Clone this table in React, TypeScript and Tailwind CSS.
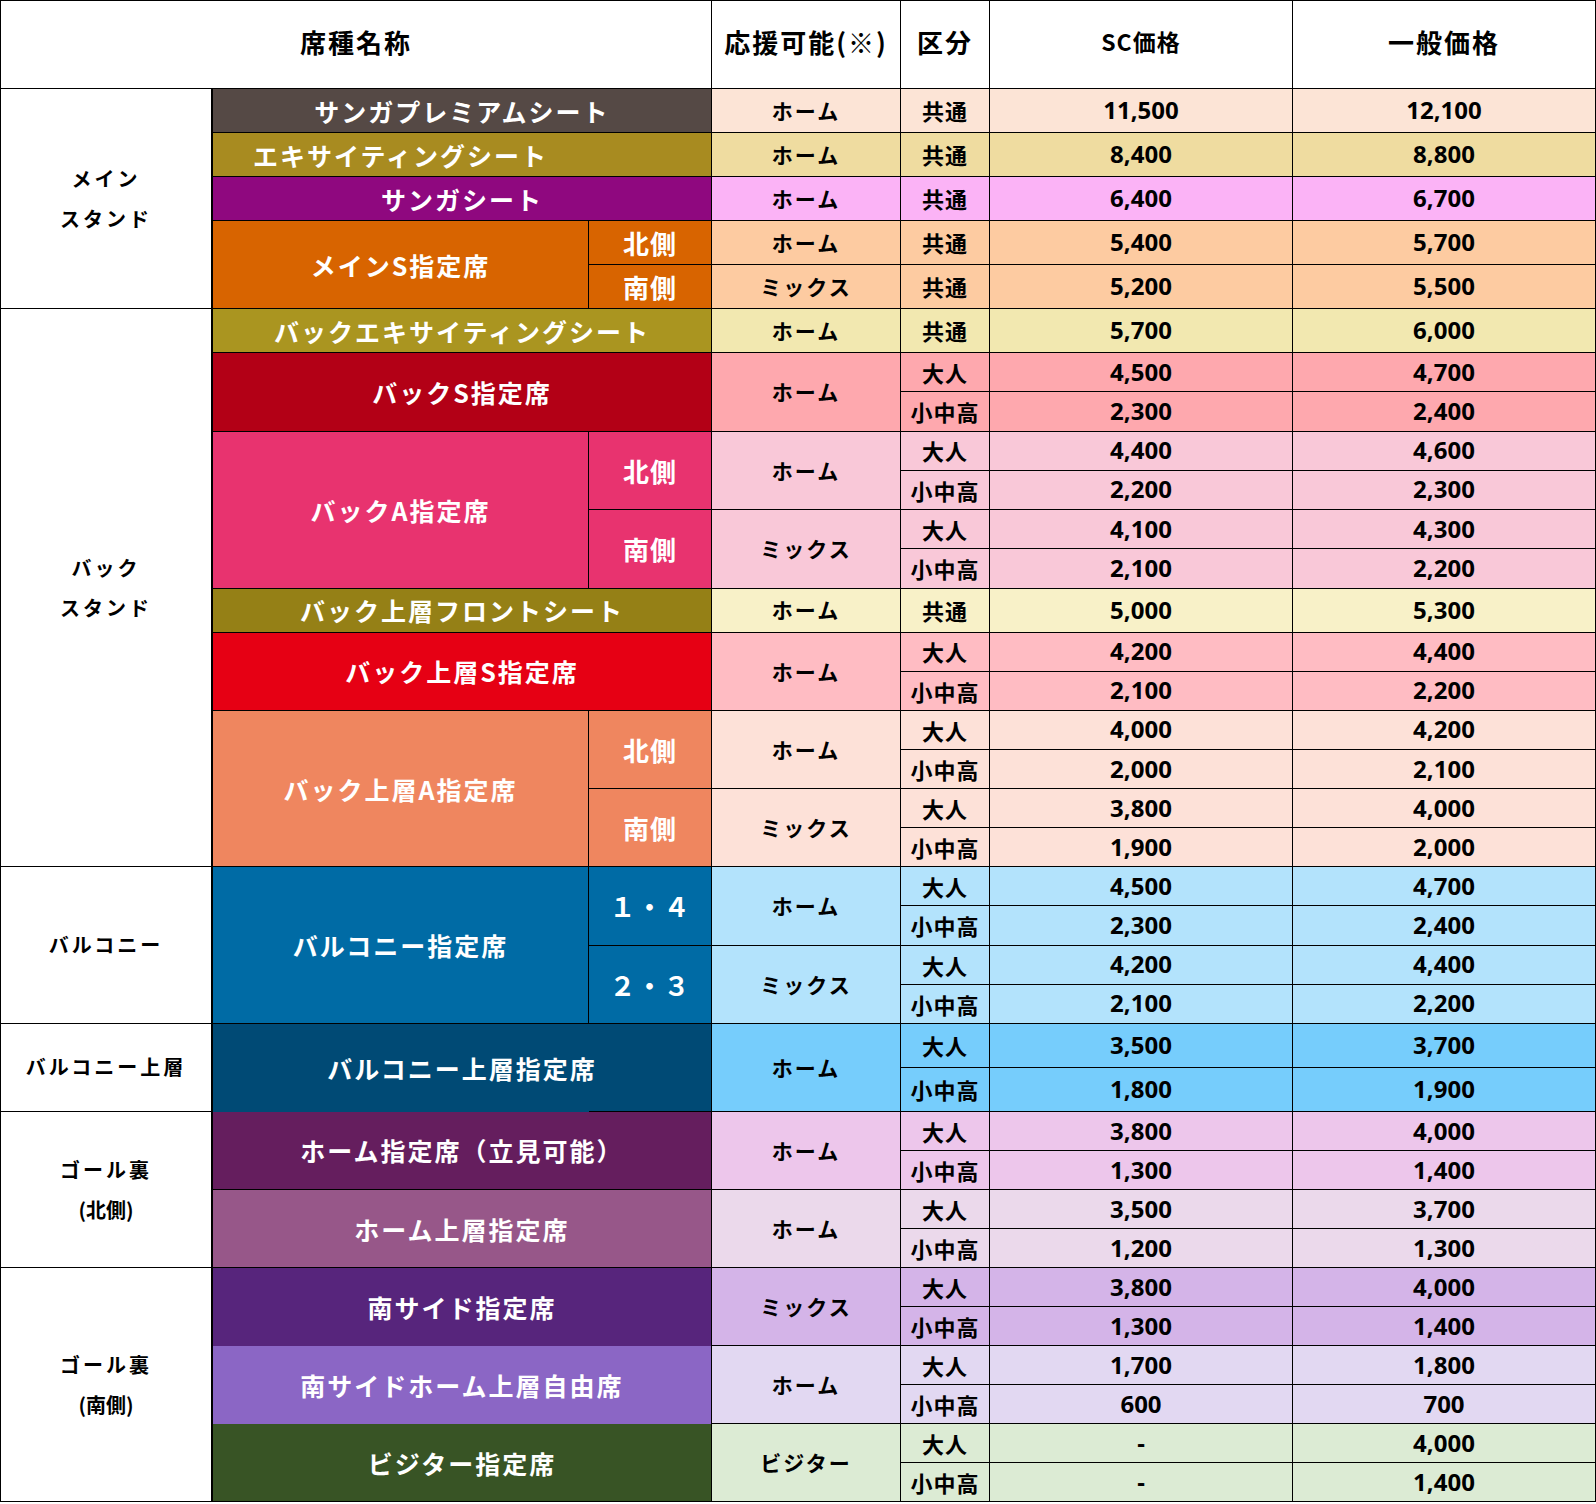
import React from "react";

const BASE =
  "flex items-center justify-center text-center border-r border-b border-black leading-[1.2] whitespace-nowrap";
const NUM = "font-['Noto_Sans','Noto_Sans_CJK_JP',sans-serif] text-[24px] text-black";
const KUBUN = "text-[22px] tracking-[1px] text-black";
const SUPPORT = "text-[21px] tracking-[2px] text-black";
const NAME = "text-white text-[25px] tracking-[2px]";
const SIDE = "text-white text-[26px] tracking-[1px]";
const AREA = "bg-white text-black text-[20px] tracking-[3px] leading-[40px] flex-col border-r-2";
const HEAD = "bg-white pb-[6px]";

function Cell({ className = "", children }: { className?: string; children?: React.ReactNode }) {
  return <div className={`${BASE} ${className}`}>{children}</div>;
}

// one row with 共通
function Single({ bg, support, sc, gen }: { bg: string; support: string; sc: string; gen: string }) {
  return (
    <>
      <Cell className={`${bg} ${SUPPORT}`}>{support}</Cell>
      <Cell className={`${bg} ${KUBUN}`}>共通</Cell>
      <Cell className={`${bg} ${NUM}`}>{sc}</Cell>
      <Cell className={`${bg} ${NUM}`}>{gen}</Cell>
    </>
  );
}

// 大人 / 小中高 pair (support cell spans two rows)
function Pair({ bg, support, a, b }: { bg: string; support: string; a: [string, string]; b: [string, string] }) {
  return (
    <>
      <Cell className={`${bg} ${SUPPORT} row-span-2`}>{support}</Cell>
      <Cell className={`${bg} ${KUBUN}`}>大人</Cell>
      <Cell className={`${bg} ${NUM}`}>{a[0]}</Cell>
      <Cell className={`${bg} ${NUM}`}>{a[1]}</Cell>
      <Cell className={`${bg} ${KUBUN}`}>小中高</Cell>
      <Cell className={`${bg} ${NUM}`}>{b[0]}</Cell>
      <Cell className={`${bg} ${NUM}`}>{b[1]}</Cell>
    </>
  );
}

export default function App() {
  return (
    <div className="w-[1596px] bg-white font-['Noto_Sans_CJK_JP','Noto_Sans_CJK_SC',sans-serif] font-bold text-black">
      <div className="grid grid-cols-[212px_376px_123px_189px_89px_303px_303px] grid-rows-[88px_repeat(6,44px)_repeat(6,39.25px)_44px_repeat(10,39.15px)_repeat(2,44px)_repeat(10,39.05px)] border-l border-t border-black">
        {/* header */}
        <Cell className={`${HEAD} col-span-3 text-[26px] tracking-[2px]`}>席種名称</Cell>
        <Cell className={`${HEAD} text-[26px] tracking-[2px]`}>応援可能(※)</Cell>
        <Cell className={`${HEAD} text-[26px] tracking-[2px]`}>区分</Cell>
        <Cell className={`${HEAD} text-[23px] tracking-[1px]`}>SC価格</Cell>
        <Cell className={`${HEAD} text-[26px] tracking-[2px]`}>一般価格</Cell>

        {/* メインスタンド */}
        <Cell className={`${AREA} row-span-5`}>
          <span>メイン</span>
          <span>スタンド</span>
        </Cell>
        <Cell className={`${NAME} col-span-2 bg-[#554945]`}>サンガプレミアムシート</Cell>
        <Single bg="bg-[#fce4d6]" support="ホーム" sc="11,500" gen="12,100" />
        <Cell className={`${NAME} col-span-2 bg-[#a88b20] pr-[123px]`}>エキサイティングシート</Cell>
        <Single bg="bg-[#efdca0]" support="ホーム" sc="8,400" gen="8,800" />
        <Cell className={`${NAME} col-span-2 bg-[#8f087f]`}>サンガシート</Cell>
        <Single bg="bg-[#fbb3f6]" support="ホーム" sc="6,400" gen="6,700" />
        <Cell className={`${NAME} row-span-2 bg-[#d86400]`}>メインS指定席</Cell>
        <Cell className={`${SIDE} bg-[#d86400]`}>北側</Cell>
        <Single bg="bg-[#fdcba1]" support="ホーム" sc="5,400" gen="5,700" />
        <Cell className={`${SIDE} bg-[#d86400]`}>南側</Cell>
        <Single bg="bg-[#fdcba1]" support="ミックス" sc="5,200" gen="5,500" />

        {/* バックスタンド */}
        <Cell className={`${AREA} row-span-14`}>
          <span>バック</span>
          <span>スタンド</span>
        </Cell>
        <Cell className={`${NAME} col-span-2 bg-[#aa9520]`}>バックエキサイティングシート</Cell>
        <Single bg="bg-[#f2e8b0]" support="ホーム" sc="5,700" gen="6,000" />
        <Cell className={`${NAME} col-span-2 row-span-2 bg-[#b30016]`}>バックS指定席</Cell>
        <Pair bg="bg-[#fea8ae]" support="ホーム" a={["4,500", "4,700"]} b={["2,300", "2,400"]} />
        <Cell className={`${NAME} row-span-4 bg-[#e8336f]`}>バックA指定席</Cell>
        <Cell className={`${SIDE} row-span-2 bg-[#e8336f]`}>北側</Cell>
        <Pair bg="bg-[#f9c8d8]" support="ホーム" a={["4,400", "4,600"]} b={["2,200", "2,300"]} />
        <Cell className={`${SIDE} row-span-2 bg-[#e8336f]`}>南側</Cell>
        <Pair bg="bg-[#f9c8d8]" support="ミックス" a={["4,100", "4,300"]} b={["2,100", "2,200"]} />
        <Cell className={`${NAME} col-span-2 bg-[#958016]`}>バック上層フロントシート</Cell>
        <Single bg="bg-[#f8f1c8]" support="ホーム" sc="5,000" gen="5,300" />
        <Cell className={`${NAME} col-span-2 row-span-2 bg-[#e60014]`}>バック上層S指定席</Cell>
        <Pair bg="bg-[#ffbcc3]" support="ホーム" a={["4,200", "4,400"]} b={["2,100", "2,200"]} />
        <Cell className={`${NAME} row-span-4 bg-[#ef865f]`}>バック上層A指定席</Cell>
        <Cell className={`${SIDE} row-span-2 bg-[#ef865f]`}>北側</Cell>
        <Pair bg="bg-[#fde1d8]" support="ホーム" a={["4,000", "4,200"]} b={["2,000", "2,100"]} />
        <Cell className={`${SIDE} row-span-2 bg-[#ef865f]`}>南側</Cell>
        <Pair bg="bg-[#fde1d8]" support="ミックス" a={["3,800", "4,000"]} b={["1,900", "2,000"]} />

        {/* バルコニー */}
        <Cell className={`${AREA} row-span-4`}>バルコニー</Cell>
        <Cell className={`${NAME} row-span-4 bg-[#006ba5]`}>バルコニー指定席</Cell>
        <Cell className={`${SIDE} row-span-2 bg-[#006ba5]`}>１・４</Cell>
        <Pair bg="bg-[#b3e3fc]" support="ホーム" a={["4,500", "4,700"]} b={["2,300", "2,400"]} />
        <Cell className={`${SIDE} row-span-2 bg-[#006ba5]`}>２・３</Cell>
        <Pair bg="bg-[#b3e3fc]" support="ミックス" a={["4,200", "4,400"]} b={["2,100", "2,200"]} />

        {/* バルコニー上層 */}
        <Cell className={`${AREA} row-span-2 tracking-[2px]`}>バルコニー上層</Cell>
        <Cell
          className={`${NAME} col-span-2 row-span-2 border-b-0 [background:linear-gradient(to_right,transparent_376px,#000_376px)_bottom/100%_1px_no-repeat,#004a75]`}
        >
          バルコニー上層指定席
        </Cell>
        <Pair bg="bg-[#76cdfc]" support="ホーム" a={["3,500", "3,700"]} b={["1,800", "1,900"]} />

        {/* ゴール裏（北側） */}
        <Cell className={`${AREA} row-span-4`}>
          <span>ゴール裏</span>
          <span className="tracking-normal">(北側)</span>
        </Cell>
        <Cell className={`${NAME} col-span-2 row-span-2 bg-[#651e5e]`}>ホーム指定席（立見可能）</Cell>
        <Pair bg="bg-[#edc6eb]" support="ホーム" a={["3,800", "4,000"]} b={["1,300", "1,400"]} />
        <Cell className={`${NAME} col-span-2 row-span-2 bg-[#975789]`}>ホーム上層指定席</Cell>
        <Pair bg="bg-[#ebd9eb]" support="ホーム" a={["3,500", "3,700"]} b={["1,200", "1,300"]} />

        {/* ゴール裏（南側） */}
        <Cell className={`${AREA} row-span-6`}>
          <span>ゴール裏</span>
          <span className="tracking-normal">(南側)</span>
        </Cell>
        <Cell className={`${NAME} col-span-2 row-span-2 border-b-0 bg-[#57257c]`}>南サイド指定席</Cell>
        <Pair bg="bg-[#d4b4e8]" support="ミックス" a={["3,800", "4,000"]} b={["1,300", "1,400"]} />
        <Cell className={`${NAME} col-span-2 row-span-2 border-b-0 bg-[#8b66c5]`}>南サイドホーム上層自由席</Cell>
        <Pair bg="bg-[#e2d8f2]" support="ホーム" a={["1,700", "1,800"]} b={["600", "700"]} />
        <Cell className={`${NAME} col-span-2 row-span-2 bg-[#385425]`}>ビジター指定席</Cell>
        <Pair bg="bg-[#dcebd4]" support="ビジター" a={["-", "4,000"]} b={["-", "1,400"]} />
      </div>
    </div>
  );
}
